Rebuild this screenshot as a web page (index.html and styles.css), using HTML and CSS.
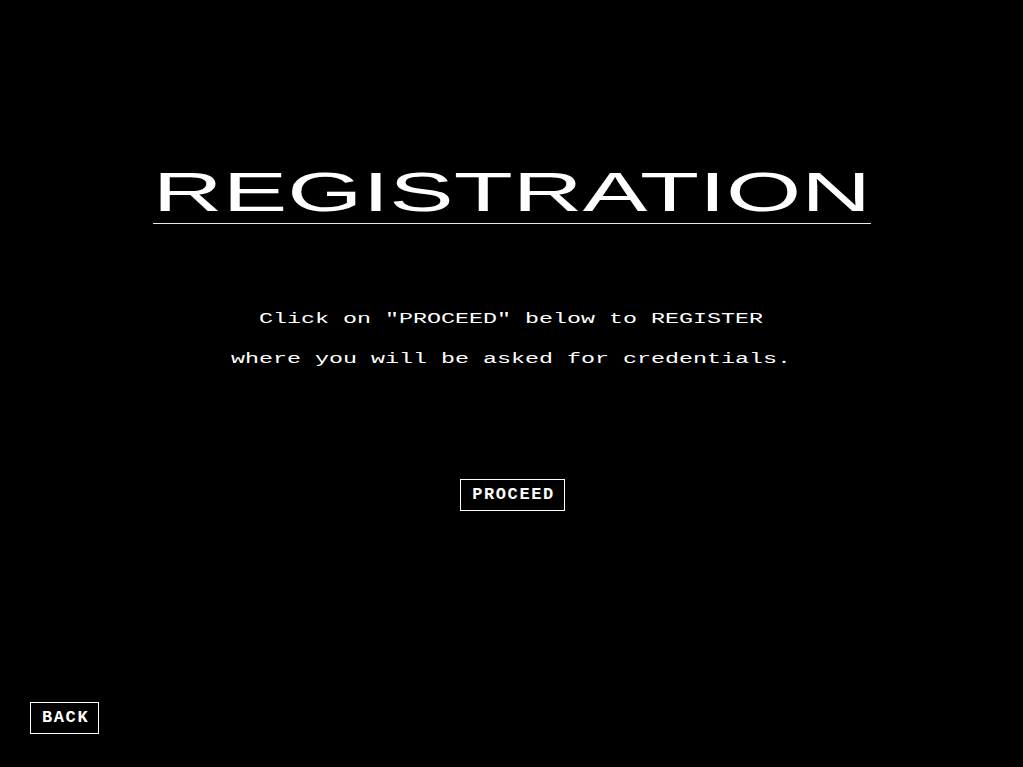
FILE: index.html
```html
<!DOCTYPE html>
<html lang="en">
<head>
<meta charset="utf-8">
<title>Registration</title>
<link rel="stylesheet" href="styles.css">
</head>
<body>
<div class="page">
  <h1 class="title"><span class="title-text">REGISTRATION</span></h1>
  <div class="intro">
    <p class="intro-line">Click on "PROCEED" below to REGISTER</p>
    <p class="intro-line">where you will be asked for credentials.</p>
  </div>
  <button class="btn btn-proceed" type="button">PROCEED</button>
  <button class="btn btn-back" type="button">BACK</button>
</div>
</body>
</html>
```

FILE: styles.css
```css
html, body {
  margin: 0;
  padding: 0;
  background: #000;
  color: #fff;
}

.page {
  box-sizing: border-box;
  height: 100vh;
  display: flex;
  flex-direction: column;
  align-items: center;
  padding: 0 30px 33px;
}

.title {
  box-sizing: border-box;
  width: 718px;
  margin: 164px 0 0;
  padding: 0 0 3px;
  border-bottom: 1px solid #e8e8e8;
  font-family: "Liberation Sans", Arial, sans-serif;
  font-weight: normal;
  font-size: 56px;
  line-height: 56px;
  text-align: center;
}

.title-text {
  display: inline-block;
  transform: scaleX(1.727);
  transform-origin: center;
}

.intro {
  margin-top: 75px;
  font-family: "Liberation Mono", "Courier New", monospace;
  font-weight: normal;
  font-size: 14px;
  line-height: 40px;
  text-align: center;
}

.intro-line {
  margin: 0;
  white-space: pre;
  transform: scaleX(1.667);
  transform-origin: center;
}

.btn {
  box-sizing: border-box;
  background: #000;
  color: #fff;
  border: 1px solid #fff;
  font-family: "Liberation Mono", "Courier New", monospace;
  font-weight: bold;
  font-size: 17px;
  letter-spacing: 1.6px;
  height: 32px;
  line-height: 30px;
  padding: 0 9px 0 11px;
  cursor: pointer;
}

.btn-proceed {
  margin-top: 100px;
  margin-left: 2px;
}

.btn-back {
  align-self: flex-start;
  margin-top: auto;
}
```
